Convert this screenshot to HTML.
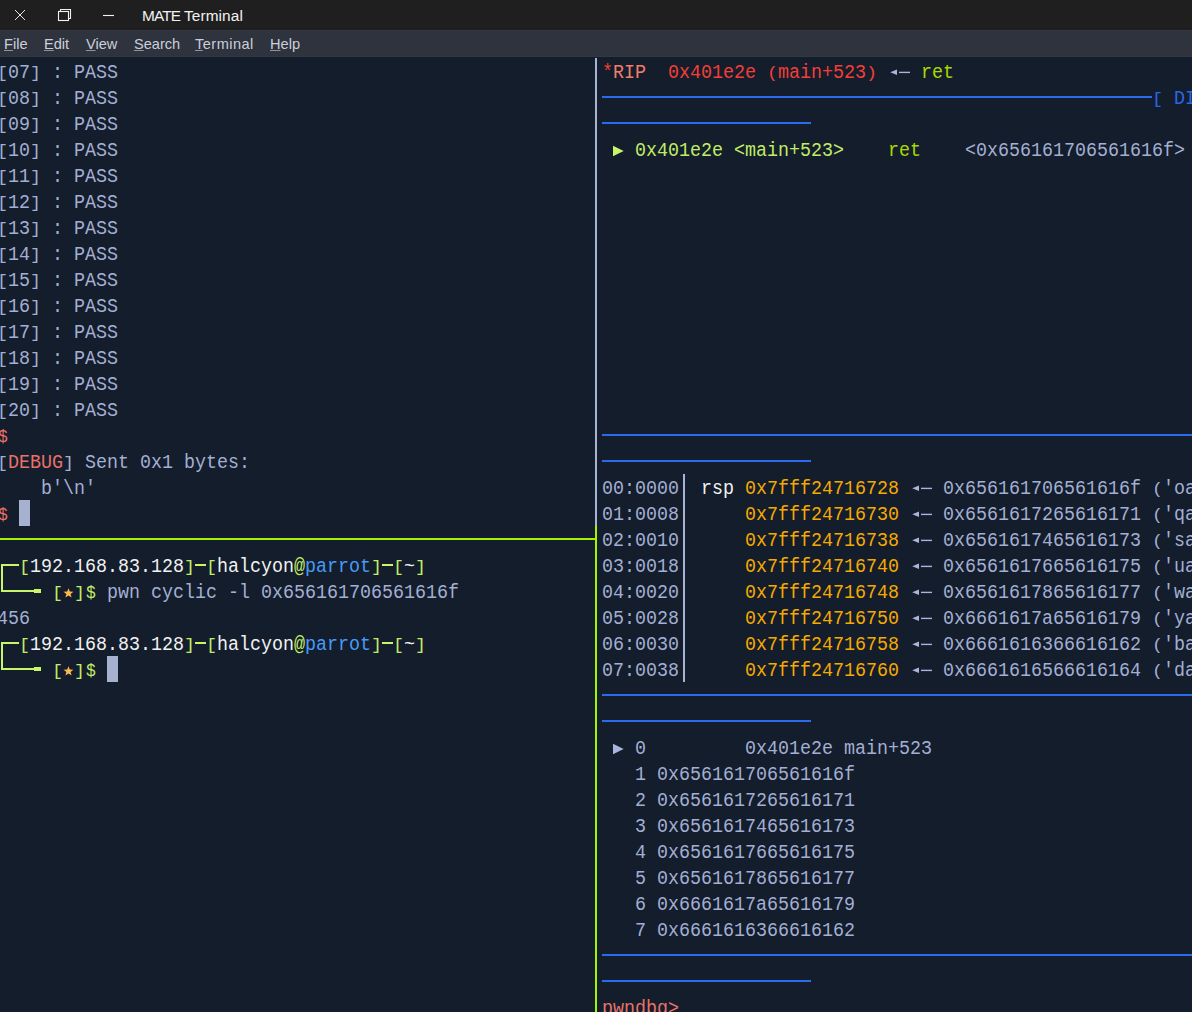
<!DOCTYPE html>
<html><head><meta charset="utf-8"><title>MATE Terminal</title>
<style>
html,body{margin:0;padding:0;background:#141d2b;}
body{width:1192px;height:1012px;overflow:hidden;background:#141d2b;position:relative;font-family:"Liberation Sans",sans-serif;}
#title{position:absolute;left:0;top:0;width:1192px;height:30px;background:#1f1f1f;}
#menu{position:absolute;left:0;top:30px;width:1192px;height:27px;background:#2f333e;box-shadow:inset 0 1px 0 #323743, inset 0 -1px 0 #333844;}
#title span{position:absolute;top:1px;line-height:30px;font-size:15.4px;color:#f2f2f2;white-space:pre;}
#menu span{position:absolute;top:1px;line-height:27px;font-size:14.6px;color:#c9cfdb;white-space:pre;}
#menu u{text-decoration:underline;text-underline-offset:0.5px;text-decoration-thickness:1px;text-decoration-color:rgba(207,213,224,0.6);}
.t{position:absolute;white-space:pre;font-family:"Liberation Mono",monospace;font-size:19.5px;line-height:26px;height:26px;padding-top:2px;box-sizing:content-box;transform:scaleX(0.94002);transform-origin:0 0;opacity:0.96;}
.tb{transform:scale(0.94002,0.88);transform-origin:0 20px;}
.td{transform:scale(0.83662,0.92);transform-origin:0 20px;}
.r{position:absolute;}
svg.r{overflow:visible;}
</style></head><body>
<div id="title">
<svg class="r" style="left:0;top:0" width="130" height="30" viewBox="0 0 130 30">
<g stroke="#f2f2f2" stroke-width="1.1" fill="none">
<path stroke-width="0.95" d="M15 10 L25 20 M25 10 L15 20"/>
<rect x="58.5" y="11.5" width="10" height="9"/>
<path d="M60.5 11.5 V9.5 H70.5 V18.5 H68.5"/>
<path d="M103 15.5 H114"/>
</g></svg>
<span style="left:142px;letter-spacing:-0.9px">MATE</span><span style="left:184px;letter-spacing:0.1px">Terminal</span>
</div>
<div id="menu">
<span style="left:4px"><u>F</u>ile</span>
<span style="left:44px"><u>E</u>dit</span>
<span style="left:86px"><u>V</u>iew</span>
<span style="left:134px"><u>S</u>earch</span>
<span style="left:195px;letter-spacing:0.45px"><u>T</u>erminal</span>
<span style="left:270px"><u>H</u>elp</span>
</div>
<span class="t tb" style="left:-3px;top:58px;color:#a9b5da;">[</span>
<span class="t" style="left:8px;top:58px;color:#a9b5da;">07</span>
<span class="t tb" style="left:30px;top:58px;color:#a9b5da;">]</span>
<span class="t" style="left:52px;top:58px;color:#a9b5da;">: PASS</span>
<span class="t tb" style="left:-3px;top:84px;color:#a9b5da;">[</span>
<span class="t" style="left:8px;top:84px;color:#a9b5da;">08</span>
<span class="t tb" style="left:30px;top:84px;color:#a9b5da;">]</span>
<span class="t" style="left:52px;top:84px;color:#a9b5da;">: PASS</span>
<span class="t tb" style="left:-3px;top:110px;color:#a9b5da;">[</span>
<span class="t" style="left:8px;top:110px;color:#a9b5da;">09</span>
<span class="t tb" style="left:30px;top:110px;color:#a9b5da;">]</span>
<span class="t" style="left:52px;top:110px;color:#a9b5da;">: PASS</span>
<span class="t tb" style="left:-3px;top:136px;color:#a9b5da;">[</span>
<span class="t" style="left:8px;top:136px;color:#a9b5da;">10</span>
<span class="t tb" style="left:30px;top:136px;color:#a9b5da;">]</span>
<span class="t" style="left:52px;top:136px;color:#a9b5da;">: PASS</span>
<span class="t tb" style="left:-3px;top:162px;color:#a9b5da;">[</span>
<span class="t" style="left:8px;top:162px;color:#a9b5da;">11</span>
<span class="t tb" style="left:30px;top:162px;color:#a9b5da;">]</span>
<span class="t" style="left:52px;top:162px;color:#a9b5da;">: PASS</span>
<span class="t tb" style="left:-3px;top:188px;color:#a9b5da;">[</span>
<span class="t" style="left:8px;top:188px;color:#a9b5da;">12</span>
<span class="t tb" style="left:30px;top:188px;color:#a9b5da;">]</span>
<span class="t" style="left:52px;top:188px;color:#a9b5da;">: PASS</span>
<span class="t tb" style="left:-3px;top:214px;color:#a9b5da;">[</span>
<span class="t" style="left:8px;top:214px;color:#a9b5da;">13</span>
<span class="t tb" style="left:30px;top:214px;color:#a9b5da;">]</span>
<span class="t" style="left:52px;top:214px;color:#a9b5da;">: PASS</span>
<span class="t tb" style="left:-3px;top:240px;color:#a9b5da;">[</span>
<span class="t" style="left:8px;top:240px;color:#a9b5da;">14</span>
<span class="t tb" style="left:30px;top:240px;color:#a9b5da;">]</span>
<span class="t" style="left:52px;top:240px;color:#a9b5da;">: PASS</span>
<span class="t tb" style="left:-3px;top:266px;color:#a9b5da;">[</span>
<span class="t" style="left:8px;top:266px;color:#a9b5da;">15</span>
<span class="t tb" style="left:30px;top:266px;color:#a9b5da;">]</span>
<span class="t" style="left:52px;top:266px;color:#a9b5da;">: PASS</span>
<span class="t tb" style="left:-3px;top:292px;color:#a9b5da;">[</span>
<span class="t" style="left:8px;top:292px;color:#a9b5da;">16</span>
<span class="t tb" style="left:30px;top:292px;color:#a9b5da;">]</span>
<span class="t" style="left:52px;top:292px;color:#a9b5da;">: PASS</span>
<span class="t tb" style="left:-3px;top:318px;color:#a9b5da;">[</span>
<span class="t" style="left:8px;top:318px;color:#a9b5da;">17</span>
<span class="t tb" style="left:30px;top:318px;color:#a9b5da;">]</span>
<span class="t" style="left:52px;top:318px;color:#a9b5da;">: PASS</span>
<span class="t tb" style="left:-3px;top:344px;color:#a9b5da;">[</span>
<span class="t" style="left:8px;top:344px;color:#a9b5da;">18</span>
<span class="t tb" style="left:30px;top:344px;color:#a9b5da;">]</span>
<span class="t" style="left:52px;top:344px;color:#a9b5da;">: PASS</span>
<span class="t tb" style="left:-3px;top:370px;color:#a9b5da;">[</span>
<span class="t" style="left:8px;top:370px;color:#a9b5da;">19</span>
<span class="t tb" style="left:30px;top:370px;color:#a9b5da;">]</span>
<span class="t" style="left:52px;top:370px;color:#a9b5da;">: PASS</span>
<span class="t tb" style="left:-3px;top:396px;color:#a9b5da;">[</span>
<span class="t" style="left:8px;top:396px;color:#a9b5da;">20</span>
<span class="t tb" style="left:30px;top:396px;color:#a9b5da;">]</span>
<span class="t" style="left:52px;top:396px;color:#a9b5da;">: PASS</span>
<span class="t td" style="left:-2.4px;top:422px;color:#f2756b;">$</span>
<span class="t tb" style="left:-3px;top:448px;color:#a9b5da;">[</span>
<span class="t" style="left:8px;top:448px;color:#f2756b;">DEBUG</span>
<span class="t tb" style="left:63px;top:448px;color:#a9b5da;">]</span>
<span class="t" style="left:85px;top:448px;color:#a9b5da;">Sent 0x1 bytes:</span>
<span class="t" style="left:41px;top:474px;color:#a9b5da;">b&#x27;\n&#x27;</span>
<span class="t td" style="left:-2.4px;top:500px;color:#f2756b;">$</span>
<div class="r" style="left:19px;top:500px;width:11px;height:26px;background:#a6b1d0"></div>
<div class="r" style="left:595px;top:58px;width:2px;height:468px;background:#a6b4d6"></div>
<div class="r" style="left:595px;top:526px;width:2px;height:486px;background:#a2f400"></div>
<div class="r" style="left:0px;top:538px;width:596px;height:2px;background:#a2f400"></div>
<div class="r" style="left:1px;top:564px;width:2px;height:14px;background:#c8f56a"></div>
<div class="r" style="left:1px;top:564px;width:18px;height:2px;background:#c8f56a"></div>
<span class="t tb" style="left:19px;top:552px;color:#c8f56a;">[</span>
<span class="t" style="left:30px;top:552px;color:#fafafa;">192.168.83.128</span>
<span class="t tb" style="left:184px;top:552px;color:#c8f56a;">]</span>
<div class="r" style="left:195px;top:564px;width:11px;height:2px;background:#c8f56a"></div>
<span class="t tb" style="left:206px;top:552px;color:#c8f56a;">[</span>
<span class="t" style="left:217px;top:552px;color:#fafafa;">halcyon</span>
<span class="t" style="left:294px;top:552px;color:#c8f56a;">@</span>
<span class="t" style="left:305px;top:552px;color:#4aa0ff;">parrot</span>
<span class="t tb" style="left:371px;top:552px;color:#c8f56a;">]</span>
<div class="r" style="left:382px;top:564px;width:11px;height:2px;background:#c8f56a"></div>
<span class="t tb" style="left:393px;top:552px;color:#c8f56a;">[</span>
<span class="t" style="left:404px;top:552px;color:#fafafa;">~</span>
<span class="t tb" style="left:415px;top:552px;color:#c8f56a;">]</span>
<div class="r" style="left:1px;top:578px;width:2px;height:14px;background:#c8f56a"></div>
<div class="r" style="left:1px;top:590px;width:40px;height:2px;background:#c8f56a"></div>
<div class="r" style="left:34px;top:589px;width:7px;height:4px;background:#c8f56a"></div>
<span class="t tb" style="left:52px;top:578px;color:#c8f56a;">[</span>
<svg class="r" style="left:63px;top:578px" width="11" height="26" viewBox="0 0 11 26"><path fill="#ffb84d" d="M5.5 10.2 L6.8 13.6 L10.4 13.8 L7.6 16.0 L8.6 19.5 L5.5 17.5 L2.4 19.5 L3.4 16.0 L0.6 13.8 L4.2 13.6 Z"/></svg>
<span class="t tb" style="left:74px;top:578px;color:#c8f56a;">]</span>
<span class="t td" style="left:85.6px;top:578px;color:#c8f56a;">$</span>
<span class="t" style="left:107px;top:578px;color:#a9b5da;">pwn cyclic -l 0x656161706561616f</span>
<span class="t" style="left:-3px;top:604px;color:#a9b5da;">456</span>
<div class="r" style="left:1px;top:642px;width:2px;height:14px;background:#c8f56a"></div>
<div class="r" style="left:1px;top:642px;width:18px;height:2px;background:#c8f56a"></div>
<span class="t tb" style="left:19px;top:630px;color:#c8f56a;">[</span>
<span class="t" style="left:30px;top:630px;color:#fafafa;">192.168.83.128</span>
<span class="t tb" style="left:184px;top:630px;color:#c8f56a;">]</span>
<div class="r" style="left:195px;top:642px;width:11px;height:2px;background:#c8f56a"></div>
<span class="t tb" style="left:206px;top:630px;color:#c8f56a;">[</span>
<span class="t" style="left:217px;top:630px;color:#fafafa;">halcyon</span>
<span class="t" style="left:294px;top:630px;color:#c8f56a;">@</span>
<span class="t" style="left:305px;top:630px;color:#4aa0ff;">parrot</span>
<span class="t tb" style="left:371px;top:630px;color:#c8f56a;">]</span>
<div class="r" style="left:382px;top:642px;width:11px;height:2px;background:#c8f56a"></div>
<span class="t tb" style="left:393px;top:630px;color:#c8f56a;">[</span>
<span class="t" style="left:404px;top:630px;color:#fafafa;">~</span>
<span class="t tb" style="left:415px;top:630px;color:#c8f56a;">]</span>
<div class="r" style="left:1px;top:656px;width:2px;height:14px;background:#c8f56a"></div>
<div class="r" style="left:1px;top:668px;width:40px;height:2px;background:#c8f56a"></div>
<div class="r" style="left:34px;top:667px;width:7px;height:4px;background:#c8f56a"></div>
<span class="t tb" style="left:52px;top:656px;color:#c8f56a;">[</span>
<svg class="r" style="left:63px;top:656px" width="11" height="26" viewBox="0 0 11 26"><path fill="#ffb84d" d="M5.5 10.2 L6.8 13.6 L10.4 13.8 L7.6 16.0 L8.6 19.5 L5.5 17.5 L2.4 19.5 L3.4 16.0 L0.6 13.8 L4.2 13.6 Z"/></svg>
<span class="t tb" style="left:74px;top:656px;color:#c8f56a;">]</span>
<span class="t td" style="left:85.6px;top:656px;color:#c8f56a;">$</span>
<div class="r" style="left:107px;top:656px;width:11px;height:26px;background:#a6b1d0"></div>
<span class="t" style="left:602px;top:58px;color:#ff4038;">*</span>
<span class="t" style="left:613px;top:58px;color:#ff8070;">RIP</span>
<span class="t" style="left:668px;top:58px;color:#ff4038;">0x401e2e </span>
<span class="t tb" style="left:767px;top:58px;color:#ff4038;">(</span>
<span class="t" style="left:778px;top:58px;color:#ff4038;">main+523</span>
<span class="t tb" style="left:866px;top:58px;color:#ff4038;">)</span>
<svg class="r" style="left:888px;top:58px" width="22" height="26" viewBox="0 0 22 26"><path fill="#a9b5da" d="M2.2 14.3 L9 11.6 L9 17 Z"/><rect x="11" y="13.7" width="11" height="1.4" fill="#a9b5da"/></svg>
<span class="t" style="left:921px;top:58px;color:#b0e000;">ret</span>
<div class="r" style="left:602px;top:96px;width:550px;height:2px;background:#2b6bf0"></div>
<span class="t tb" style="left:1152px;top:84px;color:#2b6bf0;">[</span>
<span class="t" style="left:1174px;top:84px;color:#2b6bf0;">DISASM</span>
<div class="r" style="left:602px;top:122px;width:209px;height:2px;background:#2b6bf0"></div>
<svg class="r" style="left:613px;top:136px" width="11" height="26" viewBox="0 0 11 26"><path fill="#c8f56a" d="M0 9.7 L10.7 15 L0 20.3 Z"/></svg>
<span class="t" style="left:635px;top:136px;color:#c8f56a;">0x401e2e</span>
<span class="t" style="left:734px;top:136px;color:#c8f56a;">&lt;main+523&gt;</span>
<span class="t" style="left:888px;top:136px;color:#b0e000;">ret</span>
<span class="t" style="left:965px;top:136px;color:#a9b5da;">&lt;0x656161706561616f&gt;</span>
<div class="r" style="left:602px;top:434px;width:590px;height:2px;background:#2b6bf0"></div>
<div class="r" style="left:602px;top:460px;width:209px;height:2px;background:#2b6bf0"></div>
<span class="t" style="left:602px;top:474px;color:#a9b5da;">00:0000</span>
<div class="r" style="left:683px;top:474px;width:2px;height:26px;background:#a6b4d6"></div>
<span class="t" style="left:701px;top:474px;color:#fafafa;">rsp</span>
<span class="t" style="left:745px;top:474px;color:#ffb000;">0x7fff24716728</span>
<svg class="r" style="left:910px;top:474px" width="22" height="26" viewBox="0 0 22 26"><path fill="#a9b5da" d="M2.2 14.3 L9 11.6 L9 17 Z"/><rect x="11" y="13.7" width="11" height="1.4" fill="#a9b5da"/></svg>
<span class="t" style="left:943px;top:474px;color:#a9b5da;">0x656161706561616f </span>
<span class="t tb" style="left:1152px;top:474px;color:#a9b5da;">(</span>
<span class="t" style="left:1163px;top:474px;color:#a9b5da;">&#x27;oaaaepaa</span>
<span class="t" style="left:602px;top:500px;color:#a9b5da;">01:0008</span>
<div class="r" style="left:683px;top:500px;width:2px;height:26px;background:#a6b4d6"></div>
<span class="t" style="left:745px;top:500px;color:#ffb000;">0x7fff24716730</span>
<svg class="r" style="left:910px;top:500px" width="22" height="26" viewBox="0 0 22 26"><path fill="#a9b5da" d="M2.2 14.3 L9 11.6 L9 17 Z"/><rect x="11" y="13.7" width="11" height="1.4" fill="#a9b5da"/></svg>
<span class="t" style="left:943px;top:500px;color:#a9b5da;">0x6561617265616171 </span>
<span class="t tb" style="left:1152px;top:500px;color:#a9b5da;">(</span>
<span class="t" style="left:1163px;top:500px;color:#a9b5da;">&#x27;qaaaeraa</span>
<span class="t" style="left:602px;top:526px;color:#a9b5da;">02:0010</span>
<div class="r" style="left:683px;top:526px;width:2px;height:26px;background:#a6b4d6"></div>
<span class="t" style="left:745px;top:526px;color:#ffb000;">0x7fff24716738</span>
<svg class="r" style="left:910px;top:526px" width="22" height="26" viewBox="0 0 22 26"><path fill="#a9b5da" d="M2.2 14.3 L9 11.6 L9 17 Z"/><rect x="11" y="13.7" width="11" height="1.4" fill="#a9b5da"/></svg>
<span class="t" style="left:943px;top:526px;color:#a9b5da;">0x6561617465616173 </span>
<span class="t tb" style="left:1152px;top:526px;color:#a9b5da;">(</span>
<span class="t" style="left:1163px;top:526px;color:#a9b5da;">&#x27;saaaetaa</span>
<span class="t" style="left:602px;top:552px;color:#a9b5da;">03:0018</span>
<div class="r" style="left:683px;top:552px;width:2px;height:26px;background:#a6b4d6"></div>
<span class="t" style="left:745px;top:552px;color:#ffb000;">0x7fff24716740</span>
<svg class="r" style="left:910px;top:552px" width="22" height="26" viewBox="0 0 22 26"><path fill="#a9b5da" d="M2.2 14.3 L9 11.6 L9 17 Z"/><rect x="11" y="13.7" width="11" height="1.4" fill="#a9b5da"/></svg>
<span class="t" style="left:943px;top:552px;color:#a9b5da;">0x6561617665616175 </span>
<span class="t tb" style="left:1152px;top:552px;color:#a9b5da;">(</span>
<span class="t" style="left:1163px;top:552px;color:#a9b5da;">&#x27;uaaaevaa</span>
<span class="t" style="left:602px;top:578px;color:#a9b5da;">04:0020</span>
<div class="r" style="left:683px;top:578px;width:2px;height:26px;background:#a6b4d6"></div>
<span class="t" style="left:745px;top:578px;color:#ffb000;">0x7fff24716748</span>
<svg class="r" style="left:910px;top:578px" width="22" height="26" viewBox="0 0 22 26"><path fill="#a9b5da" d="M2.2 14.3 L9 11.6 L9 17 Z"/><rect x="11" y="13.7" width="11" height="1.4" fill="#a9b5da"/></svg>
<span class="t" style="left:943px;top:578px;color:#a9b5da;">0x6561617865616177 </span>
<span class="t tb" style="left:1152px;top:578px;color:#a9b5da;">(</span>
<span class="t" style="left:1163px;top:578px;color:#a9b5da;">&#x27;waaaexaa</span>
<span class="t" style="left:602px;top:604px;color:#a9b5da;">05:0028</span>
<div class="r" style="left:683px;top:604px;width:2px;height:26px;background:#a6b4d6"></div>
<span class="t" style="left:745px;top:604px;color:#ffb000;">0x7fff24716750</span>
<svg class="r" style="left:910px;top:604px" width="22" height="26" viewBox="0 0 22 26"><path fill="#a9b5da" d="M2.2 14.3 L9 11.6 L9 17 Z"/><rect x="11" y="13.7" width="11" height="1.4" fill="#a9b5da"/></svg>
<span class="t" style="left:943px;top:604px;color:#a9b5da;">0x6661617a65616179 </span>
<span class="t tb" style="left:1152px;top:604px;color:#a9b5da;">(</span>
<span class="t" style="left:1163px;top:604px;color:#a9b5da;">&#x27;yaaaezaa</span>
<span class="t" style="left:602px;top:630px;color:#a9b5da;">06:0030</span>
<div class="r" style="left:683px;top:630px;width:2px;height:26px;background:#a6b4d6"></div>
<span class="t" style="left:745px;top:630px;color:#ffb000;">0x7fff24716758</span>
<svg class="r" style="left:910px;top:630px" width="22" height="26" viewBox="0 0 22 26"><path fill="#a9b5da" d="M2.2 14.3 L9 11.6 L9 17 Z"/><rect x="11" y="13.7" width="11" height="1.4" fill="#a9b5da"/></svg>
<span class="t" style="left:943px;top:630px;color:#a9b5da;">0x6661616366616162 </span>
<span class="t tb" style="left:1152px;top:630px;color:#a9b5da;">(</span>
<span class="t" style="left:1163px;top:630px;color:#a9b5da;">&#x27;baafcaaf</span>
<span class="t" style="left:602px;top:656px;color:#a9b5da;">07:0038</span>
<div class="r" style="left:683px;top:656px;width:2px;height:26px;background:#a6b4d6"></div>
<span class="t" style="left:745px;top:656px;color:#ffb000;">0x7fff24716760</span>
<svg class="r" style="left:910px;top:656px" width="22" height="26" viewBox="0 0 22 26"><path fill="#a9b5da" d="M2.2 14.3 L9 11.6 L9 17 Z"/><rect x="11" y="13.7" width="11" height="1.4" fill="#a9b5da"/></svg>
<span class="t" style="left:943px;top:656px;color:#a9b5da;">0x6661616566616164 </span>
<span class="t tb" style="left:1152px;top:656px;color:#a9b5da;">(</span>
<span class="t" style="left:1163px;top:656px;color:#a9b5da;">&#x27;daafeaaf</span>
<div class="r" style="left:602px;top:694px;width:590px;height:2px;background:#2b6bf0"></div>
<div class="r" style="left:602px;top:720px;width:209px;height:2px;background:#2b6bf0"></div>
<svg class="r" style="left:613px;top:734px" width="11" height="26" viewBox="0 0 11 26"><path fill="#a9b5da" d="M0 9.7 L10.7 15 L0 20.3 Z"/></svg>
<span class="t" style="left:635px;top:734px;color:#a9b5da;">0</span>
<span class="t" style="left:745px;top:734px;color:#a9b5da;">0x401e2e main+523</span>
<span class="t" style="left:635px;top:760px;color:#a9b5da;">1 0x656161706561616f</span>
<span class="t" style="left:635px;top:786px;color:#a9b5da;">2 0x6561617265616171</span>
<span class="t" style="left:635px;top:812px;color:#a9b5da;">3 0x6561617465616173</span>
<span class="t" style="left:635px;top:838px;color:#a9b5da;">4 0x6561617665616175</span>
<span class="t" style="left:635px;top:864px;color:#a9b5da;">5 0x6561617865616177</span>
<span class="t" style="left:635px;top:890px;color:#a9b5da;">6 0x6661617a65616179</span>
<span class="t" style="left:635px;top:916px;color:#a9b5da;">7 0x6661616366616162</span>
<div class="r" style="left:602px;top:954px;width:590px;height:2px;background:#2b6bf0"></div>
<div class="r" style="left:602px;top:980px;width:209px;height:2px;background:#2b6bf0"></div>
<span class="t" style="left:602px;top:994px;color:#f2756b;">pwndbg&gt;</span>
</body></html>
